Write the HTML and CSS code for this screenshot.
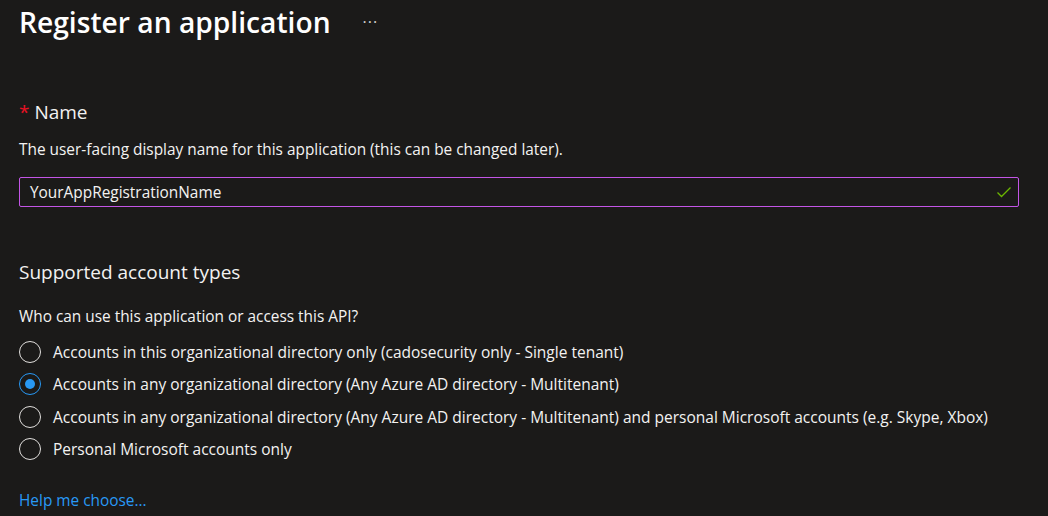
FILE: index.html
```html
<!DOCTYPE html>
<html>
<head>
<meta charset="utf-8">
<link rel="stylesheet" href="styles.css">
</head>
<body>
<div class="page">
  <header class="title-row">
    <h1 class="title">Register an application</h1>
    <span class="more">···</span>
  </header>

  <section class="name-section">
    <h2 class="label"><span class="req">*</span> Name</h2>
    <p class="desc">The user-facing display name for this application (this can be changed later).</p>
    <div class="input">
      <span class="input-text">YourAppRegistrationName</span>
      <svg class="check" width="16" height="16" viewBox="0 0 16 16"><path d="M1.5 8.5 L5.5 12.5 L14.5 3.5" fill="none" stroke="#6bb700" stroke-width="1.3"/></svg>
    </div>
  </section>

  <section class="acct-section">
    <h2 class="heading">Supported account types</h2>
    <p class="question">Who can use this application or access this API?</p>
    <div class="radios">
      <label class="radio"><span class="circle"></span><span>Accounts in this organizational directory only (cadosecurity only - Single tenant)</span></label>
      <label class="radio"><span class="circle on"></span><span>Accounts in any organizational directory (Any Azure AD directory - Multitenant)</span></label>
      <label class="radio"><span class="circle"></span><span>Accounts in any organizational directory (Any Azure AD directory - Multitenant) and personal Microsoft accounts (e.g. Skype, Xbox)</span></label>
      <label class="radio"><span class="circle"></span><span>Personal Microsoft accounts only</span></label>
    </div>
    <a class="help">Help me choose...</a>
  </section>
</div>
</body>
</html>
```

FILE: styles.css
```css
html, body {
  margin: 0;
  padding: 0;
  background: #1b1a19;
  color: #f3f2f1;
  font-family: "Segoe UI", "Open Sans", "Noto Sans", sans-serif;
  height: 516px;
  overflow: hidden;
}
.page {
  padding: 0 29px 0 19px;
}
.title-row {
  display: flex;
  align-items: center;
  height: 44px;
}
.title {
  margin: 0;
  font-size: 28.2px;
  font-weight: 600;
  line-height: 44px;
  color: #ffffff;
}
.more {
  margin-left: 32px;
  font-size: 16px;
  color: #d2d0ce;
  letter-spacing: 1px;
}
.name-section {
  margin-top: 54px;
}
.label {
  margin: 0;
  font-size: 19px;
  font-weight: 400;
  line-height: 28px;
}
.req {
  color: #e81123;
}
.desc {
  margin: 14px 0 0;
  font-size: 15.4px;
  line-height: 20px;
}
.input {
  box-sizing: border-box;
  margin-top: 17px;
  height: 30px;
  border: 1px solid #c355e6;
  border-radius: 2px;
  display: flex;
  align-items: center;
  justify-content: space-between;
  padding: 0 6px 0 10px;
}
.input-text {
  font-size: 15.4px;
}
.check {
  display: block;
}
.acct-section {
  margin-top: 51px;
}
.heading {
  margin: 0;
  font-size: 19px;
  font-weight: 400;
  line-height: 28px;
}
.question {
  margin: 21px 0 0;
  font-size: 15.4px;
  line-height: 20px;
}
.radios {
  margin-top: 9px;
  display: flex;
  flex-direction: column;
}
.radio {
  display: flex;
  align-items: center;
  height: 32.3px;
  font-size: 15.5px;
}
.circle {
  box-sizing: border-box;
  width: 22px;
  height: 22px;
  border: 1.5px solid #e1dfdd;
  border-radius: 50%;
  margin-right: 12px;
  display: flex;
  align-items: center;
  justify-content: center;
  flex-shrink: 0;
}
.circle.on {
  border-color: #2899f5;
}
.circle.on::after {
  content: "";
  width: 10px;
  height: 10px;
  border-radius: 50%;
  background: #2899f5;
}
.help {
  display: block;
  margin-top: 26px;
  font-size: 15.4px;
  line-height: 20px;
  color: #2899f5;
}
```
